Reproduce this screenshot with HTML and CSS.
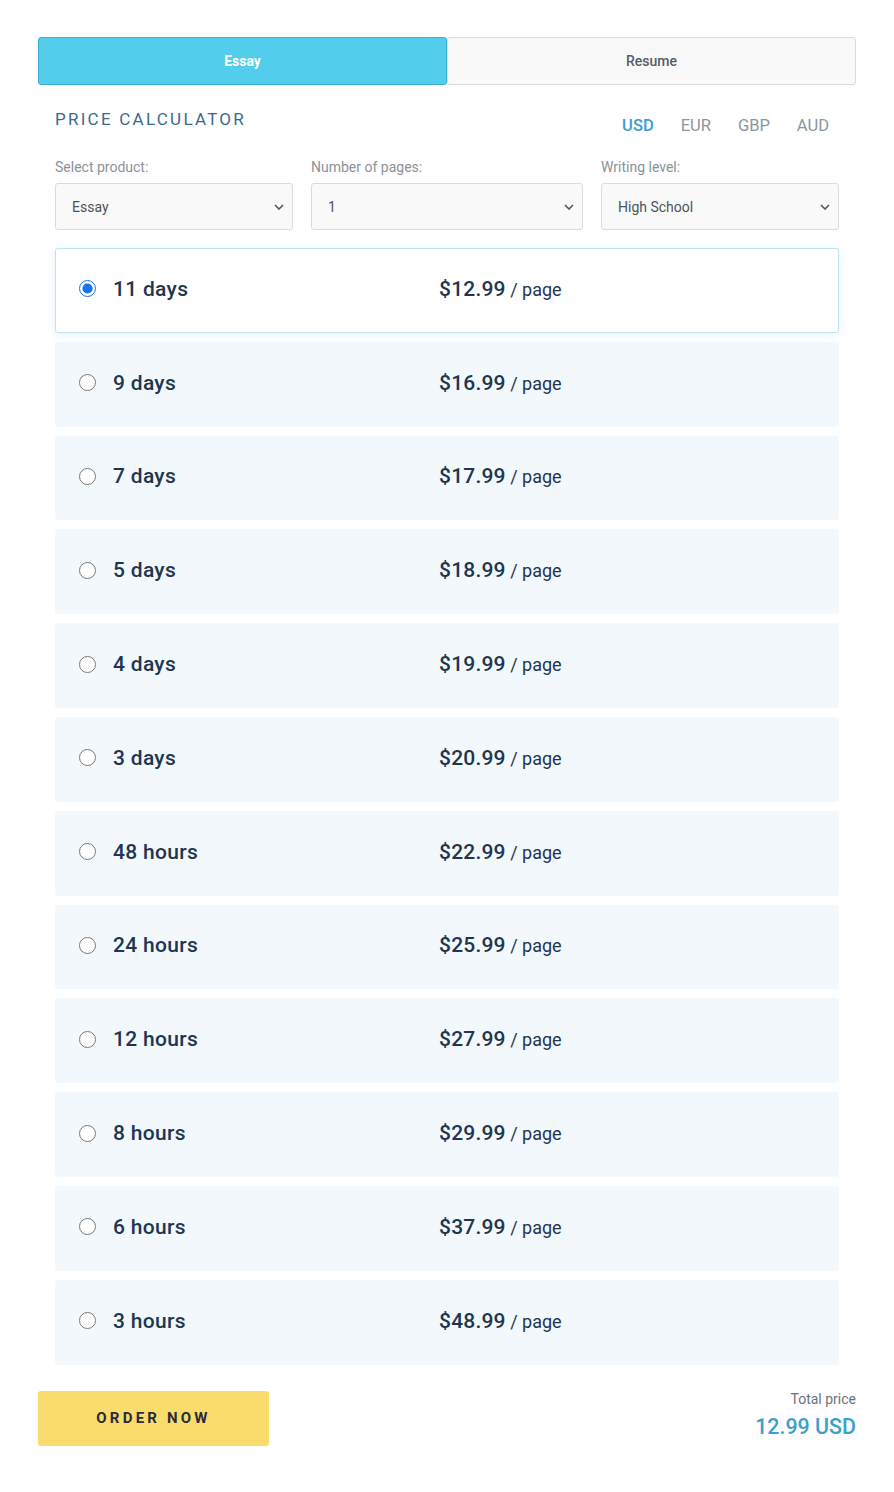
FILE: index.html
```html
<!DOCTYPE html>
<html>
<head>
<meta charset="utf-8">
<link rel="stylesheet" href="styles.css">
</head>
<body>
<div class="wrap">
  <div class="tabs">
    <div class="tab active">Essay</div>
    <div class="tab">Resume</div>
  </div>
  <div class="calc">
    <div class="head">
      <div class="title">PRICE CALCULATOR</div>
      <div class="cur">
        <span class="on">USD</span><span>EUR</span><span>GBP</span><span>AUD</span>
      </div>
    </div>
    <div class="fields">
      <div class="field f1">
        <div class="label">Select product:</div>
        <div class="sel"><span>Essay</span><svg viewBox="0 0 10 6" width="10" height="6"><path d="M1 1l4 4 4-4" fill="none" stroke="#555" stroke-width="1.6"/></svg></div>
      </div>
      <div class="field f2">
        <div class="label">Number of pages:</div>
        <div class="sel"><span>1</span><svg viewBox="0 0 10 6" width="10" height="6"><path d="M1 1l4 4 4-4" fill="none" stroke="#555" stroke-width="1.6"/></svg></div>
      </div>
      <div class="field f3">
        <div class="label">Writing level:</div>
        <div class="sel"><span>High School</span><svg viewBox="0 0 10 6" width="10" height="6"><path d="M1 1l4 4 4-4" fill="none" stroke="#555" stroke-width="1.6"/></svg></div>
      </div>
    </div>
    <div class="rows">
      <label class="row sel-row"><input type="radio" name="d" checked><span class="dl">11 days</span><span class="pr"><b>$12.99</b> / page</span></label>
      <label class="row"><input type="radio" name="d"><span class="dl">9 days</span><span class="pr"><b>$16.99</b> / page</span></label>
      <label class="row"><input type="radio" name="d"><span class="dl">7 days</span><span class="pr"><b>$17.99</b> / page</span></label>
      <label class="row"><input type="radio" name="d"><span class="dl">5 days</span><span class="pr"><b>$18.99</b> / page</span></label>
      <label class="row"><input type="radio" name="d"><span class="dl">4 days</span><span class="pr"><b>$19.99</b> / page</span></label>
      <label class="row"><input type="radio" name="d"><span class="dl">3 days</span><span class="pr"><b>$20.99</b> / page</span></label>
      <label class="row"><input type="radio" name="d"><span class="dl">48 hours</span><span class="pr"><b>$22.99</b> / page</span></label>
      <label class="row"><input type="radio" name="d"><span class="dl">24 hours</span><span class="pr"><b>$25.99</b> / page</span></label>
      <label class="row"><input type="radio" name="d"><span class="dl">12 hours</span><span class="pr"><b>$27.99</b> / page</span></label>
      <label class="row"><input type="radio" name="d"><span class="dl">8 hours</span><span class="pr"><b>$29.99</b> / page</span></label>
      <label class="row"><input type="radio" name="d"><span class="dl">6 hours</span><span class="pr"><b>$37.99</b> / page</span></label>
      <label class="row"><input type="radio" name="d"><span class="dl">3 hours</span><span class="pr"><b>$48.99</b> / page</span></label>
    </div>
  </div>
  <div class="foot">
    <div class="btn">ORDER NOW</div>
    <div class="total">
      <div class="tl">Total price</div>
      <div class="tv">12.99 USD</div>
    </div>
  </div>
</div>
</body>
</html>
```
FILE: styles.css
```css
* { box-sizing: border-box; }
body { margin: 0; background: #fff; font-family: Roboto, "Liberation Sans", sans-serif; color: #1f3651; }
.wrap { width: 818px; margin: 37px 0 0 38px; }
.tabs { display: flex; height: 48px; }
.tab { flex: 1; display: flex; align-items: center; justify-content: center; font-size: 14px; font-weight: 500; color: #555d66; background: #f9f9f9; border: 1px solid #d6dce2; border-radius: 3px; }
.tab.active { background: #52cdeb; border-color: #3aaed4; color: #fff; font-weight: 700; }
.calc { padding: 0 17px; }
.head { display: flex; justify-content: space-between; align-items: flex-start; height: 74px; }
.title { margin-top: 24px; font-size: 17px; letter-spacing: 2.25px; color: #3c6a8e; }
.cur { display: flex; gap: 27px; margin-top: 31px; margin-right: 10px; font-size: 16.5px; color: #8c96a2; }
.cur .on { color: #3aa0cc; font-weight: 500; }
.fields { display: flex; gap: 18px; }
.f1 { width: 238px; }
.f2 { width: 272px; }
.f3 { width: 238px; }
.label { font-size: 14px; color: #8b9299; line-height: 16px; margin-top: 0; margin-bottom: 8px; }
.sel { height: 47px; border: 1px solid #d8dde2; border-radius: 3px; background: #f9f9f9; display: flex; align-items: center; justify-content: space-between; padding: 0 8px 0 16px; font-size: 14px; color: #4b545d; }
.rows { display: flex; flex-direction: column; gap: 9px; margin-top: 18px; }
.row { height: 84.8px; display: flex; align-items: center; background: #f2f8fb; border-radius: 3px; padding-left: 24px; padding-bottom: 3px; }
.row.sel-row { background: #fff; border: 1px solid #bfe4ef; box-shadow: 0 2px 10px rgba(80,170,210,0.15); padding-left: 23px; }
.row input { width: 17px; height: 17px; margin: 0; accent-color: #1a73e8; }
.dl { width: 326px; margin-left: 17px; font-size: 21px; letter-spacing: 0.3px; font-weight: 500; color: #1f3651; }
.pr { font-size: 18px; color: #1f3651; }
.pr b { font-size: 21px; font-weight: 500; letter-spacing: 0.2px; }
.foot { display: flex; justify-content: space-between; align-items: flex-start; margin-top: 26px; }
.btn { width: 231px; height: 55px; background: #f9dc6b; border-radius: 3px; display: flex; align-items: center; justify-content: center; font-size: 15px; font-weight: 700; letter-spacing: 3.2px; color: #2a2b3a; }
.total { text-align: right; }
.tl { font-size: 14px; color: #6c737b; line-height: 16px; }
.tv { font-size: 21.4px; color: #3aa0cc; font-weight: 500; margin-top: 7px; }
```
